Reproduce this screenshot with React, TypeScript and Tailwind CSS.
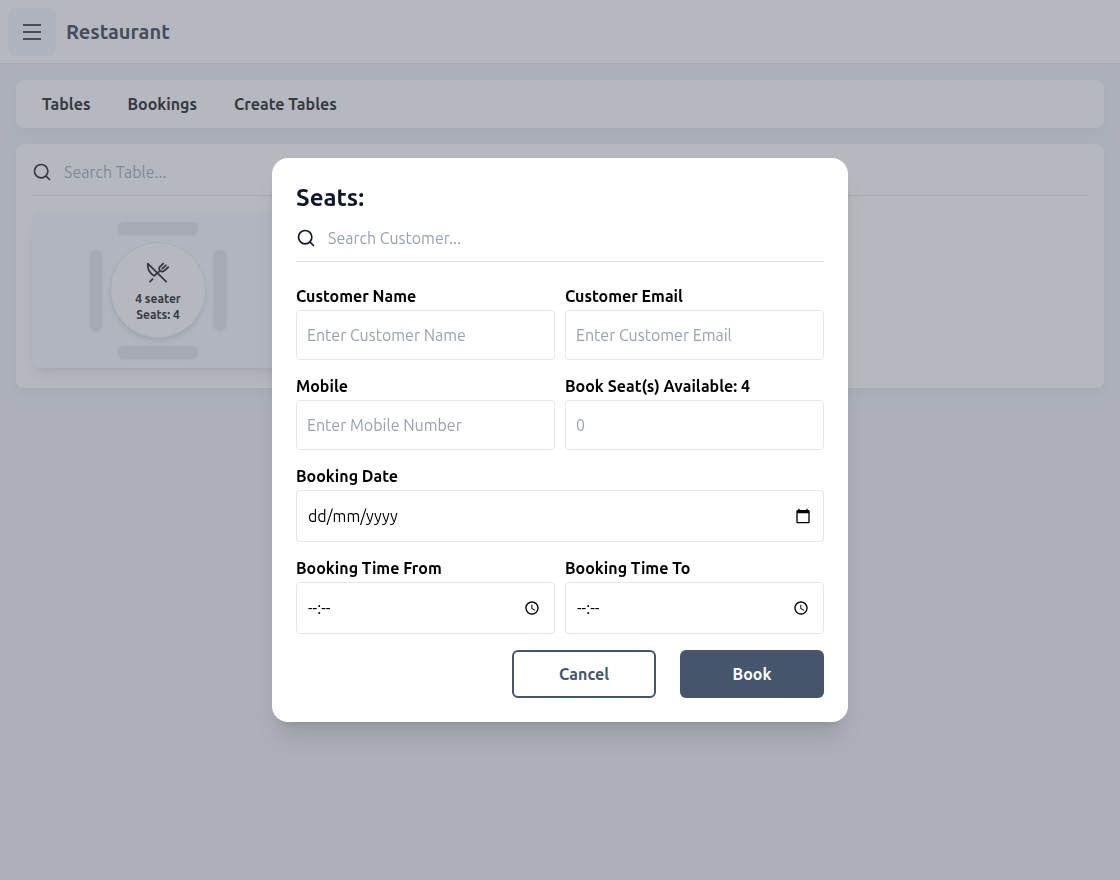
import { useState } from "react";
import { RiMenuLine } from "react-icons/ri";
import { FiSearch } from "react-icons/fi";

const labelClass = "pb-0.5 text-base leading-6 font-bold text-black";
const seatClass = "rounded-full bg-[#e1e2e9] shadow-sm";

function Field({
  id,
  label,
  placeholder,
  type = "text",
}: {
  id: string;
  label: string;
  placeholder: string;
  type?: string;
}) {
  return (
    <div className="flex min-w-0 flex-col">
      <label htmlFor={id} className={labelClass}>
        {label}
      </label>
      <input
        id={id}
        type={type}
        placeholder={placeholder}
        className="h-[50px] w-full rounded border border-gray-200 bg-white px-2.5 text-base text-black outline-none placeholder:text-gray-400"
      />
    </div>
  );
}

function CalendarIcon() {
  return (
    <svg width="16" height="16" viewBox="0 0 24 24" fill="currentColor" aria-hidden="true">
      <path d="M20 3h-1V1h-2v2H7V1H5v2H4c-1.1 0-2 .9-2 2v16c0 1.1.9 2 2 2h16c1.1 0 2-.9 2-2V5c0-1.1-.9-2-2-2zm0 18H4V8h16v13z" />
    </svg>
  );
}

function ClockIcon() {
  return (
    <svg width="16" height="16" viewBox="0 0 24 24" fill="currentColor" aria-hidden="true">
      <path d="M11.99 2C6.47 2 2 6.48 2 12s4.47 10 9.99 10C17.52 22 22 17.52 22 12S17.52 2 11.99 2zM12 20c-4.42 0-8-3.58-8-8s3.58-8 8-8 8 3.58 8 8-3.58 8-8 8z" />
      <path d="M12.5 7H11v6l5.25 3.15.75-1.23-4.5-2.67z" />
    </svg>
  );
}

function CutleryIcon() {
  return (
    <svg
      width="30"
      height="30"
      viewBox="0 0 30 30"
      fill="none"
      stroke="currentColor"
      strokeWidth="1.8"
      strokeLinecap="round"
      strokeLinejoin="round"
      aria-hidden="true"
    >
      <path d="M23.2 24.6 4.8 6.6C4.2 11.2 6.6 16 11.2 18.9L14.4 16" />
      <path d="M7 24.6 9.6 22.1" />
      <path d="M15 15.6 17.2 13.6" />
      <path d="M20.2 6.6 17 9.7C15.7 11 15.9 12.7 17 13.7C18.2 14.8 19.9 14.9 21.2 13.7L25.2 10.2" />
      <path d="M22.900 8.300 19.200 11.700" />
    </svg>
  );
}

function PickerField({
  id,
  label,
  placeholder,
  kind,
}: {
  id: string;
  label: string;
  placeholder: string;
  kind: "date" | "time";
}) {
  return (
    <div className="flex min-w-0 flex-col">
      <label htmlFor={id} className={labelClass}>
        {label}
      </label>
      <div
        className={`flex h-[52px] items-center rounded border border-gray-200 bg-white pl-[11px] ${
          kind === "date" ? "pr-3" : "pr-3.5"
        }`}
      >
        <input
          id={id}
          type="text"
          placeholder={placeholder}
          className="min-w-0 flex-1 bg-transparent text-base text-black outline-none placeholder:text-black"
        />
        <button type="button" aria-label={`Choose ${label}`} className="text-black">
          {kind === "date" ? <CalendarIcon /> : <ClockIcon />}
        </button>
      </div>
    </div>
  );
}

function SearchBar({ id, placeholder }: { id: string; placeholder: string }) {
  return (
    <div className="flex h-12 items-center gap-3 border-b border-[#e0e1e4]">
      <label htmlFor={id} aria-label={placeholder}>
        <FiSearch size={20} />
      </label>
      <input
        id={id}
        type="text"
        placeholder={placeholder}
        className="min-w-0 flex-1 bg-transparent text-base outline-none placeholder:text-gray-400"
      />
    </div>
  );
}

function TableCard({ seats }: { seats: number }) {
  return (
    <button
      type="button"
      className="flex flex-col items-center gap-2 rounded-lg bg-[#f7f8fa] py-2.5 shadow-lg"
    >
      <span className={`h-3 w-20 ${seatClass}`} />
      <span className="flex items-center gap-2">
        <span className={`h-20 w-3 ${seatClass}`} />
        <span className="flex size-24 flex-col items-center justify-center rounded-full border border-gray-200 bg-white text-xs font-bold shadow-md">
          <span className="mb-1">
            <CutleryIcon />
          </span>
          <span>{seats} seater</span>
          <span>Seats: {seats}</span>
        </span>
        <span className={`h-20 w-3 ${seatClass}`} />
      </span>
      <span className={`h-3 w-20 ${seatClass}`} />
    </button>
  );
}

export default function App() {
  const [open, setOpen] = useState(true);

  return (
    <div className="min-h-screen bg-[#eeeff2] font-['Ubuntu','Noto_Sans',sans-serif] text-black">
      <header className="flex h-16 items-center gap-2.5 border-b border-[#e0e1e4] bg-white px-2">
        <button
          type="button"
          aria-label="Menu"
          className="flex size-12 items-center justify-center rounded-lg bg-gray-100 text-gray-800"
        >
          <RiMenuLine size={24} />
        </button>
        <h1 className="text-xl font-semibold text-gray-800">Restaurant</h1>
      </header>

      <main className="flex flex-col gap-4 p-4">
        <nav className="flex h-12 items-center gap-[37px] rounded-lg bg-white px-[26px] font-semibold shadow-[0_4px_16px_rgba(0,0,0,0.05)]">
          <a href="#tables">Tables</a>
          <a href="#bookings">Bookings</a>
          <a href="#create">Create Tables</a>
        </nav>

        <section className="rounded-lg bg-white px-4 pt-1 pb-5 shadow-[0_4px_16px_rgba(0,0,0,0.05)]">
          <SearchBar id="search-table" placeholder="Search Table..." />
          <div className="mt-4 grid grid-cols-4 gap-4">
            <TableCard seats={4} />
          </div>
        </section>
      </main>

      {open && (
        <div className="fixed inset-0 flex items-center justify-center bg-[#6b7280]/50 p-4">
          <form
            role="dialog"
            aria-labelledby="dialog-title"
            onSubmit={(e) => e.preventDefault()}
            className="w-full max-w-xl rounded-2xl bg-white p-6 text-gray-900 shadow-xl"
          >
            <h2 id="dialog-title" className="text-2xl leading-8 font-bold">
              Seats:
            </h2>
            <SearchBar id="search-customer" placeholder="Search Customer..." />
            <div className="mt-[22px] grid grid-cols-2 gap-x-2.5 gap-y-3.5">
              <Field id="name" label="Customer Name" placeholder="Enter Customer Name" />
              <Field
                id="email"
                label="Customer Email"
                placeholder="Enter Customer Email"
                type="email"
              />
              <Field id="mobile" label="Mobile" placeholder="Enter Mobile Number" type="tel" />
              <Field id="seats" label="Book Seat(s) Available: 4" placeholder="0" />
              <div className="col-span-2">
                <PickerField id="date" label="Booking Date" placeholder="dd/mm/yyyy" kind="date" />
              </div>
              <PickerField id="from" label="Booking Time From" placeholder="--:--" kind="time" />
              <PickerField id="to" label="Booking Time To" placeholder="--:--" kind="time" />
            </div>
            <div className="mt-4 flex justify-end gap-6">
              <button
                type="button"
                onClick={() => setOpen(false)}
                className="h-12 w-36 rounded-md border-2 border-slate-600 bg-white font-bold text-slate-600"
              >
                Cancel
              </button>
              <button
                type="submit"
                className="h-12 w-36 rounded-md bg-slate-600 font-bold text-white"
              >
                Book
              </button>
            </div>
          </form>
        </div>
      )}
    </div>
  );
}
